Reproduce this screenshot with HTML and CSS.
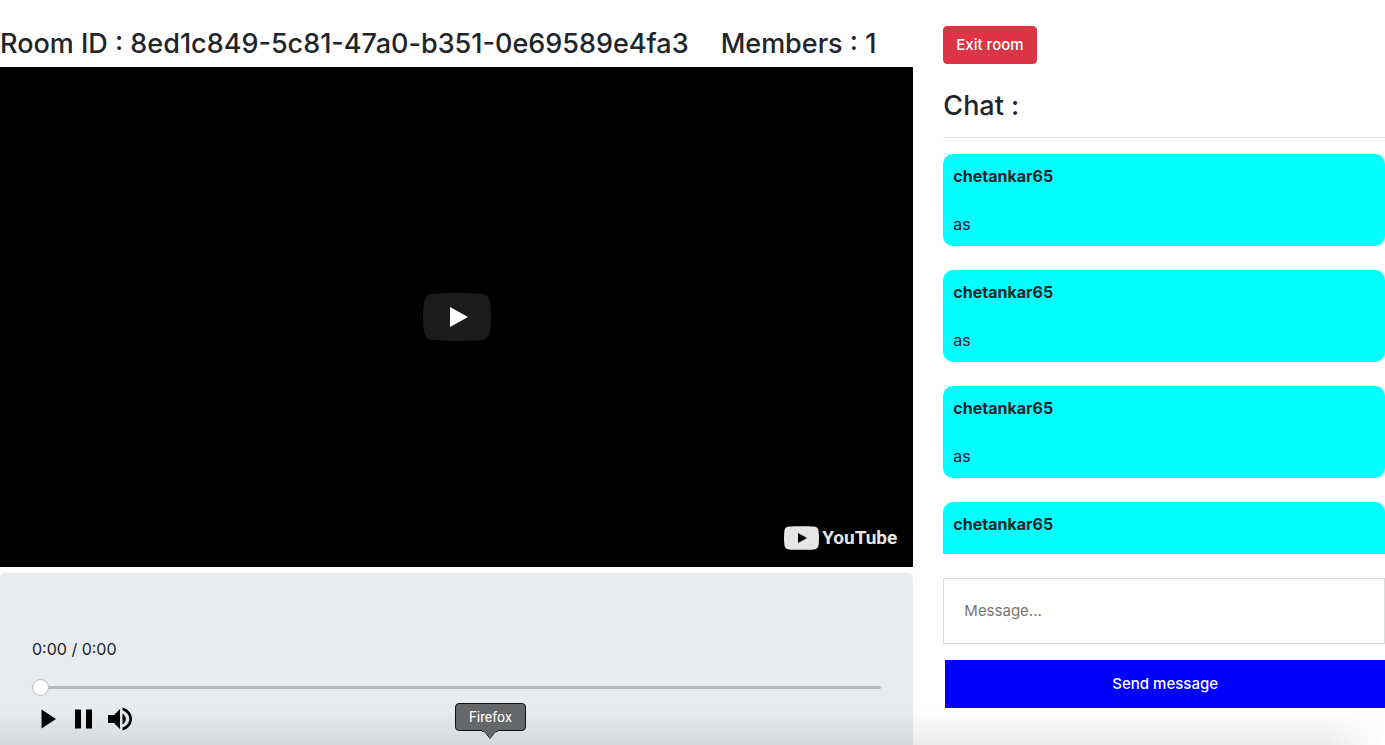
FILE: index.html
```html
<!DOCTYPE html>
<html lang="en">
<head>
<meta charset="utf-8">
<meta name="viewport" content="width=device-width, initial-scale=1">
<title>Watch room</title>
<link rel="stylesheet" href="styles.css">
</head>
<body>
<div class="room">
  <main class="stage">
    <header class="room-header">
      <h3 class="heading">Room ID : 8ed1c849-5c81-47a0-b351-0e69589e4fa3</h3>
      <h3 class="heading">Members : 1</h3>
    </header>
    <section class="video" aria-label="Video">
      <button class="video-play" type="button" aria-label="Play video">
        <svg width="68" height="48" viewBox="0 0 68 48" aria-hidden="true"><path fill="#1c1c1c" d="M66.5 7.7c-.8-2.9-2.5-5.4-5.4-6.2C55.8.1 34 0 34 0S12.200.1 6.900 1.500c-2.900.8-4.600 3.300-5.400 6.200C.1 13 0 24 0 24s.1 11 1.500 16.300c.8 2.900 2.500 5.400 5.400 6.200C12.200 47.900 34 48 34 48s21.800-.1 27.100-1.500c2.900-.8 4.600-3.300 5.400-6.200C67.900 35 68 24 68 24s-.1-11-1.500-16.300z"/><path fill="#fff" d="M45 24 27 14v20z"/></svg>
      </button>
      <a class="brand" href="#" aria-label="YouTube">
        <svg width="35" height="24" viewBox="0 0 35 24" aria-hidden="true"><path fill="#e6e6e6" fill-rule="evenodd" d="M5 .6C9 0 26 0 30 .6c3 .4 4.300 1.700 4.600 4.400.5 4 .5 10 0 14-.3 2.700-1.600 4-4.600 4.400-4 .6-21 .6-25 0C2 23 .7 21.700.4 19c-.5-4-.5-10 0-14C.7 2.300 2 1 5 .6zM14 7v10l9-5z"/></svg>
        <span class="brand-name">YouTube</span>
      </a>
    </section>
    <section class="controls" aria-label="Player controls">
      <div>0:00 / 0:00</div>
      <input class="seek" type="range" min="0" max="100" value="0" aria-label="Seek">
      <div class="control-buttons">
        <button class="icon-button" type="button" aria-label="Play"><svg width="36" height="36" viewBox="0 0 36 36" aria-hidden="true"><path d="M9.500 8.500v19L24 18z"/></svg></button>
        <button class="icon-button" type="button" aria-label="Pause"><svg width="36" height="36" viewBox="0 0 36 36" aria-hidden="true"><path d="M7 8.500h6v19H7zm11 0h6v19h-6z"/></svg></button>
        <button class="icon-button" type="button" aria-label="Volume"><svg width="36" height="36" viewBox="0 0 36 36" aria-hidden="true"><path d="M4 14v8h6l6 6V8l-6 6zM18.500 12.500v11c2-1 3.300-3 3.300-5.500s-1.300-4.500-3.300-5.500zm0-6v3c4 1.200 6.800 4.500 6.800 8.500s-2.800 7.300-6.800 8.500v3c5.500-1.300 9.500-6 9.500-11.500S24 7.800 18.500 6.500z"/></svg></button>
      </div>
    </section>
  </main>
  <aside class="sidebar">
    <button class="exit" type="button">Exit room</button>
    <h3 class="heading chat-title">Chat :</h3>
    <div class="messages">
      <article class="message"><strong>chetankar65</strong><p class="message-text">as</p></article>
      <article class="message"><strong>chetankar65</strong><p class="message-text">as</p></article>
      <article class="message"><strong>chetankar65</strong><p class="message-text">as</p></article>
      <article class="message"><strong>chetankar65</strong></article>
    </div>
    <form class="composer">
      <input class="message-input" type="text" placeholder="Message..." aria-label="Message">
      <button class="send" type="button">Send message</button>
    </form>
  </aside>
</div>
<div class="dock-shade"></div>
<div class="tooltip" role="tooltip">Firefox<svg class="tooltip-arrow" width="20" height="10" viewBox="0 0 20 10" aria-hidden="true"><path fill="#666769" d="M2 0h16v1c-2 0-3 1-4 2l-4 5-4-5C5 2 4 1 2 1z"/><path fill="none" stroke="#222" d="M2 1.500c2 0 3 .5 4 2l4 5 4-5c1-1.500 2-2 4-2"/></svg></div>
</body>
</html>
```
FILE: styles.css
```css
* { box-sizing: border-box; }

body {
  margin: 0;
  height: 100vh;
  overflow: hidden;
  background: #fff;
  color: #212529;
  font: 16px/24px Inter, "Liberation Sans", sans-serif;
}

button, input { font: inherit; }

.room {
  display: grid;
  grid-template-columns: 2fr 1fr;
  min-height: 100vh;
  margin: 0 -15px;
}

.stage {
  display: flex;
  flex-direction: column;
  min-width: 0;
  padding: 27px 15px 0;
}

.sidebar { min-width: 0; padding: 26px 15px 0; }

.heading {
  margin: 0;
  font-size: 27px;
  line-height: 34px;
  font-weight: 500;
  white-space: nowrap;
}

.room-header { display: flex; gap: 32px; padding-bottom: 6px; }

.video {
  position: relative;
  display: flex;
  align-items: center;
  justify-content: center;
  height: 500px;
  background: #000;
}

.video-play { padding: 0; border: 0; background: none; }
.video-play svg { display: block; }

.brand {
  position: absolute;
  right: 16px;
  bottom: 16px;
  display: flex;
  align-items: center;
  gap: 3px;
  color: #e6e6e6;
  text-decoration: none;
}

.brand-name { font: bold 19px/26px Roboto, sans-serif; }

.controls {
  flex: 1;
  margin-top: 6px;
  padding: 64px 32px 0;
  border-radius: 5px 5px 0 0;
  background: #e9ecef;
}

.seek {
  display: block;
  width: 100%;
  height: 18px;
  margin: 17px 0 5px;
  appearance: none;
  background: transparent;
}

.seek::-webkit-slider-runnable-track {
  height: 3px;
  border-radius: 2px;
  background: #b5b7b9;
}

.seek::-webkit-slider-thumb {
  appearance: none;
  width: 17px;
  height: 17px;
  margin-top: -7px;
  border: 1px solid #bbb;
  border-radius: 50%;
  background: #fff;
}

.control-buttons { display: flex; }
.icon-button { padding: 0; border: 0; background: none; }
.icon-button svg { display: block; }

.exit {
  display: block;
  padding: 6px 12px;
  border: 1px solid #dc3545;
  border-radius: 4px;
  background: #dc3545;
  color: #fff;
  font-size: 15px;
  font-weight: 500;
}

.chat-title {
  margin: 25px 0 16px;
  padding-bottom: 14px;
  border-bottom: 1px solid #e5e5e5;
}

.messages { height: 400px; overflow: hidden; }

.message {
  min-height: 92px;
  margin-bottom: 24px;
  padding: 10px;
  border-radius: 10px;
  background: #0ff;
}

.message-text { margin: 24px 0 0; }

.composer {
  display: flex;
  flex-direction: column;
  gap: 16px;
  margin: 24px 0 0;
}

.message-input {
  padding: 20px;
  border: 1px solid #dcdcdc;
  color: #212529;
  font-size: 15px;
}

.message-input::placeholder { color: #757575; }

.send {
  margin-left: 2px;
  padding: 12px;
  border: 0;
  background: #00f;
  color: #fff;
  font-size: 15px;
  font-weight: 500;
}

.dock-shade {
  position: fixed;
  inset: auto 0 0;
  height: 36px;
  background: linear-gradient(transparent, rgba(0, 0, 0, 0.08));
  mask-image: linear-gradient(to left, transparent, #000 60px);
  pointer-events: none;
}

.tooltip {
  position: fixed;
  left: 455px;
  bottom: 14px;
  padding: 2px 13px;
  border: 1px solid #111;
  border-radius: 4px;
  background: #666769;
  color: #fff;
  font: 14px/22px Roboto, sans-serif;
}

.tooltip-arrow {
  position: absolute;
  top: 100%;
  left: calc(50% - 10px);
}
```
